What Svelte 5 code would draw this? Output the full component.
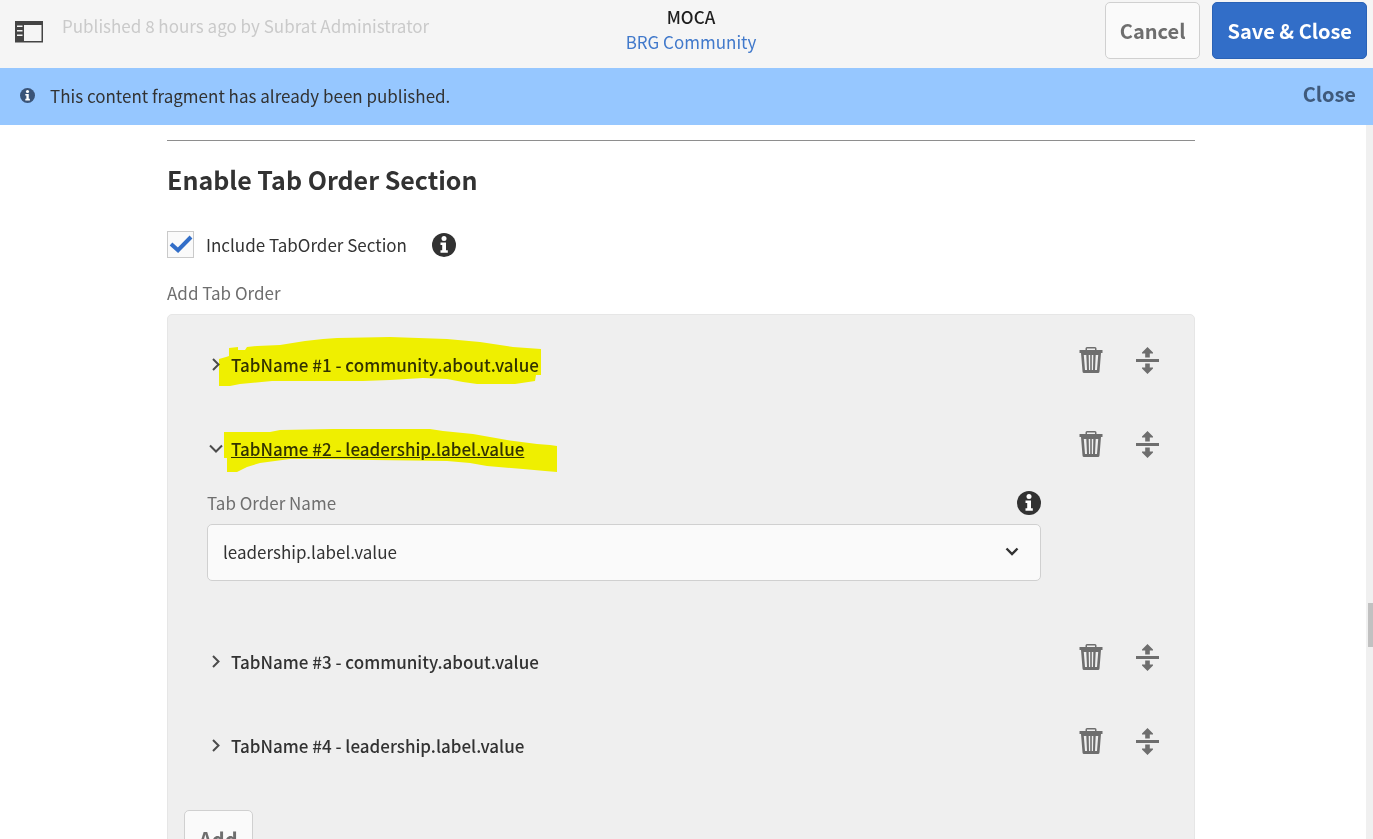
<script lang="ts">
  type TabItem = {
    id: number;
    value: string;
    open: boolean;
    mark?: string;
  };

  const options = ['community.about.value', 'leadership.label.value'];

  // highlighter strokes, drawn from the top left corner of a row
  const marks = {
    first:
      'M1 63V36L8 34L11 33V25L20 24V27H27L29 24L39 23L62 22L87 18L105 16L119 15L172 14L229 16L262 19L295 24L323 26V52H318L317 58L297 61L259 61L245 59L229 56L205 55L172 57L145 58H54L22 61L12 63Z',
    second:
      'M6 51V25L52 25L62 23L115 22L167 22L212 22L225 24L255 27L289 33L319 37L332 38L339 39V65L327 64L305 62L269 59L252 56L229 54L155 53L112 52L72 52L42 56L29 60L19 65H9V51Z',
  };

  let include = $state(true);
  let showAlert = $state(true);
  let nextId = $state(5);
  let tabs = $state<TabItem[]>([
    { id: 1, value: 'community.about.value', open: false, mark: marks.first },
    { id: 2, value: 'leadership.label.value', open: true, mark: marks.second },
    { id: 3, value: 'community.about.value', open: false },
    { id: 4, value: 'leadership.label.value', open: false },
  ]);

  function removeTab(id: number) {
    tabs = tabs.filter((tab) => tab.id !== id);
  }

  function addTab() {
    tabs.push({ id: nextId, value: options[0], open: false });
    nextId += 1;
  }
</script>

{#snippet infoIcon()}
  <svg class="info" viewBox="0 0 24 24" aria-hidden="true">
    <circle cx="12" cy="12" r="12" fill="currentColor" />
    <circle cx="12" cy="5.6" r="2.5" fill="#fff" />
    <path d="M8.5 9.5H14v7.700h1.800v2.600H8.500v-2.600h1.700v-5.100H8.500z" fill="#fff" />
  </svg>
{/snippet}

<div class="editor">
  <header>
    <div class="status">
      <button class="icon-btn" aria-label="Toggle side panel">
        <svg width="28" height="22" viewBox="0 0 28 22">
          <path
            fill="#444"
            fill-rule="evenodd"
            d="M0 0h28v21.500H0zM9 4v16h17.500V4zM2 4.500v1.500h5.500V4.500zM2 9v1.500h5.500V9zM2 13.500v1.500h5.500v-1.500z"
          />
        </svg>
      </button>
      <span>Published 8 hours ago by Subrat Administrator</span>
    </div>
    <div class="title">
      <span>MOCA</span>
      <a href="#community">BRG Community</a>
    </div>
    <div class="header-actions">
      <button class="btn">Cancel</button>
      <button class="btn primary">Save &amp; Close</button>
    </div>
  </header>

  {#if showAlert}
    <div class="alert">
      {@render infoIcon()}
      <span>This content fragment has already been published.</span>
      <button class="close" onclick={() => (showAlert = false)}>Close</button>
    </div>
  {/if}

  <div class="body">
    <main>
      <hr />
      <h2>Enable Tab Order Section</h2>

      <div class="include">
        <label>
          <span class="checkbox">
            <input type="checkbox" bind:checked={include} />
            {#if include}
              <svg width="27" height="27" viewBox="0 0 27 27" aria-hidden="true">
                <path d="M4 13l7 6.200L24 6" fill="none" stroke="#326ec8" stroke-width="4" />
              </svg>
            {/if}
          </span>
          Include TabOrder Section
        </label>
        {@render infoIcon()}
      </div>

      <div class="caption">Add Tab Order</div>

      <div class="panel">
        {#each tabs as tab, i (tab.id)}
          <div class="row">
            <button
              class="toggle"
              class:open={tab.open}
              aria-expanded={tab.open}
              onclick={() => (tab.open = !tab.open)}
            >
              <svg width="16" height="16" viewBox="0 0 16 16" aria-hidden="true">
                <path
                  d={tab.open ? 'M3 4.500l6 6 6-6' : 'M6 2l5.500 5.500L6 13'}
                  fill="none"
                  stroke="#4b4b4b"
                  stroke-width="2"
                />
              </svg>
              <span>TabName #{i + 1} - {tab.value}</span>
            </button>
            <div class="row-actions">
              <button class="icon-btn" aria-label="Delete" onclick={() => removeTab(tab.id)}>
                <svg width="24" height="28" viewBox="0 0 24 28">
                  <path
                    fill="#6e6e6e"
                    fill-rule="evenodd"
                    d="M.5 4h6V2.500Q6.500 1 8 1h8q1.500 0 1.500 1.500V4h6v3H22l-1.500 18.500q-.1 1.500-1.500 1.500H5q-1.400 0-1.500-1.500L2 7H.5zM8 4h8V2.500H8zM4.800 9L6 24h2L7.300 9zM9.700 9l.3 15h1.200V9zM12.800 9v15H14l.3-15zM16.700 9L16 24h2l1.200-15z"
                  />
                </svg>
              </button>
              <button class="icon-btn" aria-label="Reorder">
                <svg width="24" height="28" viewBox="0 0 24 28">
                  <path
                    fill="#6e6e6e"
                    d="M0 13h23v3H0zM11.500 1L17 6.500v1h-3.200v4H9.200v-4H6v-1zM9.200 17.500h4.600v4H17v1L11.500 28 6 22.500v-1h3.200z"
                  />
                </svg>
              </button>
            </div>
            {#if tab.mark}
              <svg class="mark" width="360" height="84" viewBox="0 0 360 84" aria-hidden="true">
                <path d={tab.mark} fill="#ffff00" />
              </svg>
            {/if}
          </div>
          {#if tab.open}
            <div class="field">
              <div class="field-label">
                <label for="tab-{tab.id}">Tab Order Name</label>
                {@render infoIcon()}
              </div>
              <div class="select">
                <select id="tab-{tab.id}" bind:value={tab.value}>
                  {#each options as option (option)}
                    <option value={option}>{option}</option>
                  {/each}
                </select>
                <svg width="16" height="16" viewBox="0 0 16 16" aria-hidden="true">
                  <path d="M2.500 4.500L8 10l5.500-5.500" fill="none" stroke="#323232" stroke-width="2.400" />
                </svg>
              </div>
            </div>
          {/if}
        {/each}
        <button class="btn add" onclick={addTab}>Add</button>
      </div>
    </main>
    <div class="scrollbar"><div class="thumb"></div></div>
  </div>
</div>

<style>
  :global(body) {
    margin: 0;
    font-family: 'Noto Sans CJK JP', 'Open Sans', sans-serif;
    font-size: 17px;
    line-height: 24px;
    color: #323232;
    background: #fff;
  }

  .editor {
    display: flex;
    flex-direction: column;
    height: 100vh;
    overflow: hidden;
  }

  button,
  select {
    font: inherit;
    color: inherit;
  }

  button {
    padding: 0;
    border: none;
    background: none;
    cursor: pointer;
  }

  svg {
    display: block;
    flex: none;
  }

  header {
    display: grid;
    grid-template-columns: 1fr auto 1fr;
    flex: none;
    height: 68px;
    padding: 0 6px 0 15px;
    box-sizing: border-box;
    background: #f5f5f5;
  }

  .status {
    display: flex;
    align-items: flex-start;
    gap: 19px;
    padding-top: 14px;
    color: #cacaca;
  }

  .status .icon-btn {
    padding-top: 7px;
  }

  .title {
    display: flex;
    flex-direction: column;
    align-items: center;
    padding-top: 4px;
    line-height: 25px;
    color: #1e1e1e;
  }

  .title span {
    font-weight: 500;
  }

  .title a {
    color: #4179cb;
    text-decoration: none;
  }

  .header-actions {
    display: flex;
    justify-content: flex-end;
    align-items: flex-start;
    gap: 12px;
    padding-top: 2px;
  }

  .btn {
    height: 57px;
    padding: 0 14px;
    border: 1px solid #d0d0d0;
    border-radius: 5px;
    background: #fafafa;
    color: #6e6e6e;
    font-size: 20px;
    font-weight: bold;
  }

  .btn.primary {
    border-color: #2a62b6;
    background: #326ec8;
    color: #fff;
  }

  .info {
    width: 24px;
    height: 24px;
    color: #323232;
  }

  .alert {
    display: flex;
    align-items: center;
    flex: none;
    gap: 15px;
    height: 57px;
    padding: 0 17px 2px 20px;
    box-sizing: border-box;
    background: #96c7ff;
  }

  .alert .info {
    width: 15px;
    height: 15px;
    color: #3a5478;
  }

  .close {
    margin-left: auto;
    padding-bottom: 3px;
    color: #3f5a7c;
    font-size: 20px;
    font-weight: bold;
  }

  .body {
    display: flex;
    flex: 1;
    min-height: 0;
  }

  main {
    flex: 1;
    padding: 15px 171px 0 167px;
    overflow: hidden;
  }

  hr {
    height: 1px;
    margin: 0;
    border: none;
    background: #8e8e8e;
  }

  h2 {
    margin: 22px 0 35px;
    font-size: 25px;
    line-height: 33px;
    font-weight: bold;
  }

  .include {
    display: flex;
    align-items: center;
    gap: 25px;
  }

  .include label {
    display: flex;
    align-items: center;
    gap: 12px;
  }

  .checkbox {
    position: relative;
  }

  .checkbox input {
    appearance: none;
    display: block;
    width: 27px;
    height: 27px;
    margin: 0;
    border: 1px solid #cacaca;
    background: #fafafa;
  }

  .checkbox svg {
    position: absolute;
    inset: 0;
    pointer-events: none;
  }

  .caption {
    padding: 23px 0 9px;
    color: #6e6e6e;
  }

  .panel {
    padding: 8px 34px 20px 39px;
    border: 1px solid #e6e6e6;
    border-radius: 5px;
    background: #efefef;
  }

  .row {
    position: relative;
    display: flex;
    justify-content: space-between;
    align-items: flex-start;
    height: 84px;
  }

  .toggle {
    display: flex;
    align-items: center;
    gap: 8px;
    padding-top: 30px;
    font-weight: 500;
  }

  .toggle.open span {
    text-decoration: underline;
  }

  .row-actions {
    display: flex;
    gap: 33px;
    padding-top: 23px;
  }

  .mark {
    position: absolute;
    top: 0;
    left: 11px;
    mix-blend-mode: multiply;
    pointer-events: none;
  }

  .field {
    padding: 0 119px 39px 0;
  }

  .field-label {
    display: flex;
    justify-content: space-between;
    align-items: center;
    margin-bottom: 9px;
    color: #6e6e6e;
  }

  .select {
    position: relative;
  }

  select {
    appearance: none;
    display: block;
    width: 100%;
    height: 57px;
    padding: 0 48px 2px 15px;
    border: 1px solid #d0d0d0;
    border-radius: 5px;
    background: #fafafa;
  }

  .select svg {
    position: absolute;
    top: 20px;
    right: 21px;
    pointer-events: none;
  }

  .add {
    display: block;
    margin: 22px 0 0 -23px;
  }

  .scrollbar {
    display: grid;
    grid-template-rows: 478fr 44px 192fr;
    width: 7px;
    background: #f0f0f0;
  }

  .thumb {
    grid-row: 2;
    margin-left: 2px;
    background: #c1c1c1;
  }
</style>
